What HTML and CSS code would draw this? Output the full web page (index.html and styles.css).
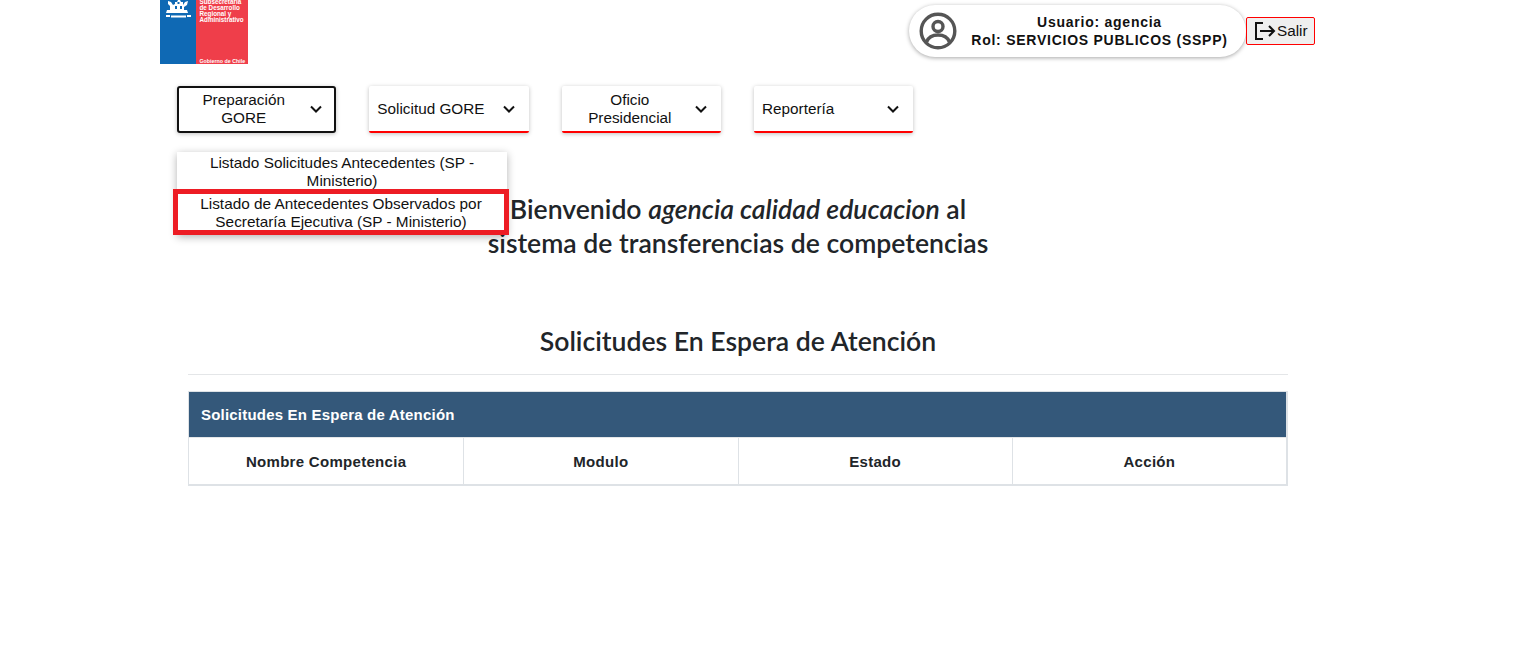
FILE: index.html
```html
<!DOCTYPE html>
<html lang="es">
<head>
	<meta charset="UTF-8">
	<meta name="viewport" content="width=device-width, initial-scale=1.0">
	<title>Sistema de transferencias de competencias</title>
	<link rel="stylesheet" href="styles.css">
</head>
<body>
	<header class="top-bar">
		<div class="logo">
			<div class="logo-blue">
				<svg class="logo-crest" viewBox="0 0 27 18" width="27" height="18">
					<!-- condor, shield and huemul, very small in the original -->
					<path fill="#fff" d="M3 1l3 1 2 3 2-1V2h2l1-2h2l1 2h2v3l2-3 3-1-1 4-3 2v3h3l1 3H1l1-3h3V6L3 4z"/>
					<path fill="#0f69b4" d="M10 6h2v3h-2zM15 6h2v3h-2zM12.500 2h2v2h-2z"/>
					<path fill="#fff" d="M1 15h4v2H1zM6 15.500h15v2H6zM22 15h4v2h-4z"/>
				</svg>
			</div>
			<div class="logo-red">
				<div class="logo-title">Subsecretaría<br>de Desarrollo<br>Regional y<br>Administrativo</div>
				<div class="logo-foot">Gobierno de Chile</div>
			</div>
		</div>
		<div class="user-area">
			<div class="user-pill">
				<svg class="user-icon" viewBox="0 0 38 38" width="38" height="38" fill="none" stroke="#555" stroke-width="3.4">
					<circle cx="19" cy="19" r="16.8"/>
					<circle cx="19" cy="14.5" r="5"/>
					<path d="M7.500 30c2-5 6.500-7 11.500-7s9.500 2 11.500 7"/>
				</svg>
				<div class="user-text">
					<div>Usuario: agencia</div>
					<div>Rol: SERVICIOS PUBLICOS (SSPP)</div>
				</div>
			</div>
			<button class="logout-btn">
				<svg viewBox="0 0 22 20" width="22" height="20" fill="none" stroke="#111" stroke-width="2">
					<path d="M9 2H2v16h7"/>
					<path d="M6 10h14M15 5l5 5-5 5"/>
				</svg>
				Salir
			</button>
		</div>
	</header>

	<nav class="main-nav">
		<div class="nav-item">
			<button class="nav-btn nav-btn-open">
				<span class="nav-label">Preparación GORE</span>
				<svg class="chevron" viewBox="0 0 12 8" width="12" height="8"><path d="M1 1.500l5 5 5-5" fill="none" stroke="#111" stroke-width="2"/></svg>
			</button>
			<div class="dropdown">
				<div class="dropdown-item">Listado Solicitudes Antecedentes (SP - Ministerio)</div>
				<div class="dropdown-item dropdown-item-marked">Listado de Antecedentes Observados por Secretaría Ejecutiva (SP - Ministerio)</div>
			</div>
		</div>
		<div class="nav-item">
			<button class="nav-btn">
				<span class="nav-label">Solicitud GORE</span>
				<svg class="chevron" viewBox="0 0 12 8" width="12" height="8"><path d="M1 1.500l5 5 5-5" fill="none" stroke="#111" stroke-width="2"/></svg>
			</button>
		</div>
		<div class="nav-item">
			<button class="nav-btn">
				<span class="nav-label nav-label-center">Oficio Presidencial</span>
				<svg class="chevron" viewBox="0 0 12 8" width="12" height="8"><path d="M1 1.500l5 5 5-5" fill="none" stroke="#111" stroke-width="2"/></svg>
			</button>
		</div>
		<div class="nav-item">
			<button class="nav-btn">
				<span class="nav-label">Reportería</span>
				<svg class="chevron" viewBox="0 0 12 8" width="12" height="8"><path d="M1 1.500l5 5 5-5" fill="none" stroke="#111" stroke-width="2"/></svg>
			</button>
		</div>
	</nav>

	<main class="content">
		<h2 class="welcome">Bienvenido <em>agencia calidad educacion</em> al<br>sistema de transferencias de competencias</h2>
		<h2 class="section-title">Solicitudes En Espera de Atención</h2>
		<hr class="divider">
		<table class="requests-table">
			<thead>
				<tr>
					<th colspan="4" class="table-caption">Solicitudes En Espera de Atención</th>
				</tr>
				<tr>
					<th class="col-first">Nombre Competencia</th>
					<th>Modulo</th>
					<th>Estado</th>
					<th>Acción</th>
				</tr>
			</thead>
		</table>
	</main>
</body>
</html>
```

FILE: styles.css
```css
* {
	box-sizing: border-box;
}
body {
	font-family: "Liberation Sans", Arial, sans-serif;
	margin: 0;
	color: #212529;
	background-color: #fff;
}
.top-bar {
	display: flex;
	justify-content: space-between;
	height: 64px;
	margin-left: 160px;
	margin-right: 225px;
}
.logo {
	display: flex;
	width: 88px;
	height: 64px;
	overflow: hidden;
}
.logo-blue {
	width: 36px;
	background-color: #0f69b4;
	display: flex;
	justify-content: center;
	align-items: flex-start;
}
.logo-crest {
	flex: none;
}
.logo-red {
	flex: 1;
	background-color: #ef3e4a;
	color: #fff;
	padding-left: 3.500px;
	display: flex;
	flex-direction: column;
	justify-content: space-between;
	font-size: 6.3px;
	font-weight: bold;
}
.logo-title {
	line-height: 6px;
	margin-top: -1px;
}
.logo-foot {
	font-size: 5.300px;
	line-height: 6px;
}
.user-area {
	display: flex;
	align-items: flex-start;
}
.user-pill {
	display: flex;
	align-items: center;
	width: 337px;
	height: 52px;
	margin-top: 5px;
	padding: 0 14px 0 10px;
	border-radius: 26px;
	background-color: #fff;
	box-shadow: 0 1px 4px rgba(0, 0, 0, 0.35);
}
.user-text {
	flex: 1;
	margin-left: 10px;
	text-align: center;
	font-size: 14px;
	font-weight: bold;
	line-height: 18px;
	letter-spacing: 0.75px;
	color: #111;
}
.logout-btn {
	display: flex;
	align-items: center;
	gap: 1px;
	width: 69px;
	height: 28px;
	margin-top: 17px;
	padding: 0 0 0 7px;
	border: 1px solid #f00;
	border-radius: 2px;
	background-color: #efefef;
	font-family: inherit;
	font-size: 15.3px;
	color: #111;
}
.main-nav {
	display: flex;
	gap: 33px;
	margin-top: 22px;
	margin-left: 177px;
}
.nav-item {
	position: relative;
	width: 159.33px;
}
.nav-btn {
	display: flex;
	align-items: center;
	width: 100%;
	height: 47px;
	padding: 0 14px 0 8px;
	border: 0;
	border-bottom: 2px solid #f00;
	border-radius: 2px;
	background-color: #fff;
	font-family: inherit;
	font-size: 15.3px;
	line-height: 18px;
	color: #111;
	box-shadow: 0 1px 4px rgba(0, 0, 0, 0.25);
}
.nav-btn-open {
	padding-right: 12px;
	padding-bottom: 2px;
	border: 2px solid #111;
	border-radius: 3px;
}
.nav-label {
	flex: 1;
	text-align: left;
}
.nav-btn-open .nav-label {
	padding-right: 10px;
	text-align: center;
}
.nav-label-center {
	padding-right: 5px;
	text-align: center;
}
.chevron {
	flex: none;
}
.dropdown {
	position: absolute;
	top: 66px;
	left: 0;
	z-index: 5;
	width: 330px;
	background-color: #fff;
	box-shadow: 0 2px 8px rgba(0, 0, 0, 0.3);
}
.dropdown-item {
	padding: 2px 16px 0;
	font-size: 15.35px;
	line-height: 18px;
	text-align: center;
	color: #111;
}
.dropdown-item-marked {
	width: 336px;
	height: 46px;
	margin: -1px 0 0 -4px;
	padding: 6px 16px 0;
	outline: 5px solid #ed1c24;
	outline-offset: -5px;
}
.content {
	width: 1100px;
	margin-left: 188px;
	margin-top: 59px;
}
.welcome,
.section-title {
	margin: 0;
	font-family: Lato, sans-serif;
	font-size: 26.6px;
	font-weight: 600;
	line-height: 34px;
	text-align: center;
	color: #212529;
}
.section-title {
	margin-top: 64px;
}
.divider {
	height: 1px;
	margin: 16px 0 16px;
	border: 0;
	background-color: #e4e6e8;
}
.requests-table {
	width: 100%;
	table-layout: fixed;
	border-collapse: separate;
	border-spacing: 0;
	border-style: solid;
	border-color: #dee2e6;
	border-width: 1px 2px 2px 1px;
}
.requests-table th {
	height: 46px;
	border-left: 1px solid #dee2e6;
	padding: 1px 0 0;
	font-size: 15px;
	letter-spacing: 0.3px;
	color: #212529;
}
.requests-table th:first-child {
	border-left: 0;
}
.requests-table .col-first {
	width: 273px;
}
.requests-table .table-caption {
	height: 46px;
	padding: 0 0 0 12px;
	border-bottom: 1px solid #e4e6e8;
	text-align: left;
	letter-spacing: 0.2px;
	background-color: #34587a;
	background-clip: padding-box;
	color: #fff;
}
```
